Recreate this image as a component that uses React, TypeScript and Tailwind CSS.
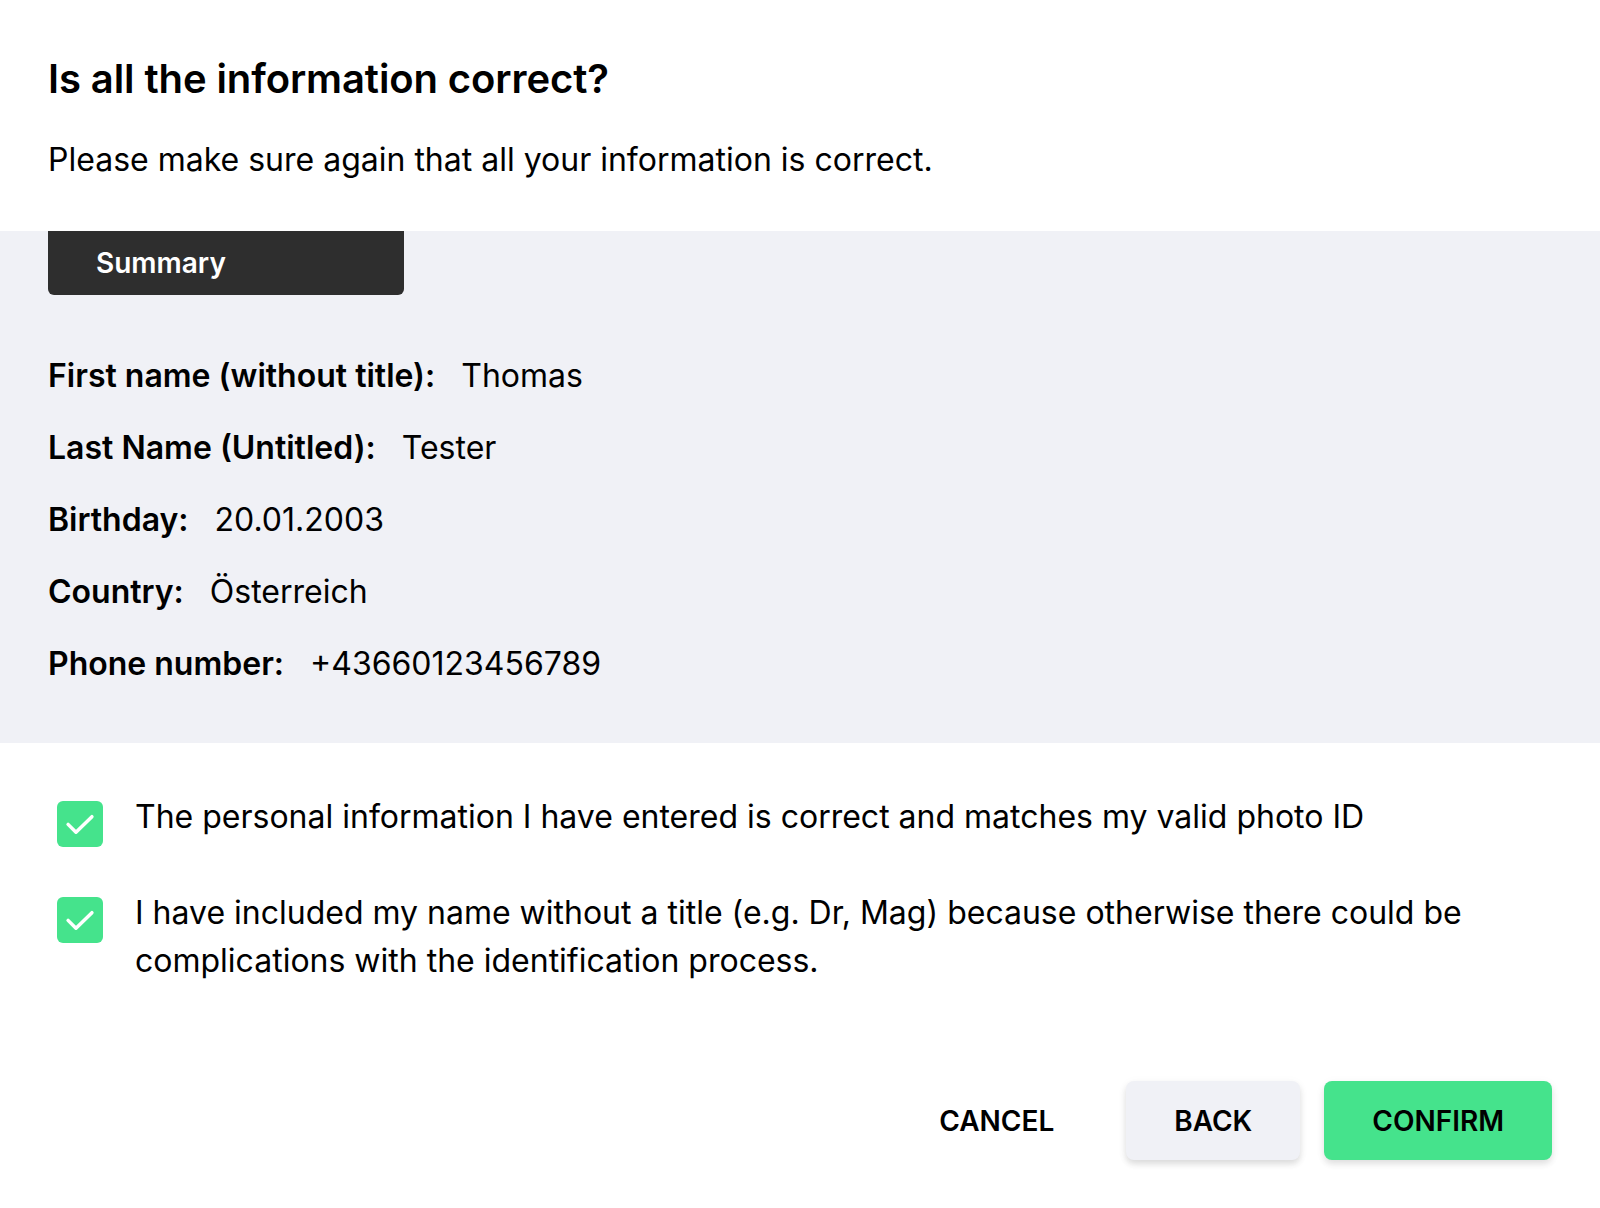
import React from 'react'

const rows = [
  { label: 'First name (without title):', value: 'Thomas' },
  { label: 'Last Name (Untitled):', value: 'Tester' },
  { label: 'Birthday:', value: '20.01.2003' },
  { label: 'Country:', value: 'Österreich' },
  { label: 'Phone number:', value: '+43660123456789' },
]

function CheckBox() {
  return (
    <div className="flex h-[46px] w-[46px] shrink-0 items-center justify-center rounded-[6px] bg-[#45e38c]">
      <svg viewBox="0 0 24 24" className="h-[44px] w-[44px]" fill="none" stroke="white" strokeWidth={1.9} strokeLinecap="round" strokeLinejoin="round">
        <path d="M5.5 12.2l4.3 4.3L18.5 8" />
      </svg>
    </div>
  )
}

export default function App() {
  return (
    <div className="min-h-screen bg-white" style={{ fontFamily: 'Inter, "Noto Sans", sans-serif' }}>
      <div className="flex h-[1208px] flex-col overflow-hidden rounded-[16px] bg-white text-black">
        {/* header */}
        <div className="px-12 pt-[53px]">
          <h1 className="text-[40px] font-semibold leading-[52px] tracking-[-0.1px]">Is all the information correct?</h1>
          <p className="mt-[35px] text-[32px] leading-[40px]">Please make sure again that all your information is correct.</p>
        </div>

        {/* summary */}
        <div className="mt-[51px] bg-[#f0f1f6] px-12 pb-[59px]">
          <div className="flex h-[64px] w-[356px] items-center rounded-b-[6px] bg-[#2e2e2e] px-12 text-[28px] font-semibold text-white">
            Summary
          </div>
          <div className="mt-[61px] flex flex-col gap-[32px]">
            {rows.map((r) => (
              <div key={r.label} className="flex items-center gap-[26px] text-[32px] leading-[40px]">
                <span className="font-semibold">{r.label}</span>
                <span>{r.value}</span>
              </div>
            ))}
          </div>
        </div>

        {/* confirmations */}
        <div className="flex flex-col gap-[50px] pl-[57px] pr-12 pt-[58px]">
          <div className="flex items-start gap-[32px]">
            <CheckBox />
            <p className="-mt-[8px] text-[32px] leading-[48px]">The personal information I have entered is correct and matches my valid photo ID</p>
          </div>
          <div className="flex items-start gap-[32px]">
            <CheckBox />
            <p className="-mt-[8px] text-[32px] leading-[48px]">
              I have included my name without a title (e.g. Dr, Mag) because otherwise there could be complications with the identification process.
            </p>
          </div>
        </div>

        {/* actions */}
        <div className="mt-auto flex items-center justify-end gap-[24px] px-12 pb-[48px]">
          <button className="h-[79px] px-12 text-[28px] font-semibold">CANCEL</button>
          <button className="h-[79px] rounded-[8px] bg-[#f0f1f6] px-12 text-[28px] font-semibold shadow-[0_4px_6px_rgba(0,0,0,0.12),0_2px_12px_rgba(0,0,0,0.04)]">
            BACK
          </button>
          <button className="h-[79px] rounded-[8px] bg-[#45e38c] px-12 text-[28px] font-semibold shadow-[0_4px_6px_rgba(0,0,0,0.1),0_2px_12px_rgba(0,0,0,0.04)]">
            CONFIRM
          </button>
        </div>
      </div>
    </div>
  )
}
